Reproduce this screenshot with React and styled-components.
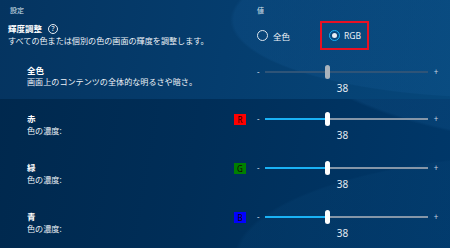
import React from 'react'
import styled, { createGlobalStyle } from 'styled-components'

const GlobalStyle = createGlobalStyle`
  html, body { margin: 0; padding: 0; background: #002c55; }
  body { font-family: "Noto Sans", "Noto Sans CJK JP", sans-serif; color: #fff; }
`

const Page = styled.div`
  width: 450px;
  height: 248px;
  overflow: hidden;
  display: flex;
  flex-direction: column;
  background:
    radial-gradient(ellipse 560px 240px at 600px 0px, rgba(16, 80, 135, 0.35) 60%, rgba(16, 80, 135, 0) 61%),
    radial-gradient(ellipse 460px 150px at 560px 260px, rgba(10, 70, 120, 0.25) 70%, rgba(10, 70, 120, 0) 71%),
    linear-gradient(100deg, #00284d 0%, #002e58 45%, #00386a 100%);
`

const TopBlock = styled.div`
  background:
    radial-gradient(ellipse 380px 110px at 500px 20px, rgba(20, 90, 150, 0.25) 70%, rgba(20, 90, 150, 0) 71%),
    linear-gradient(100deg, #053460 0%, #053d6e 50%, #06477a 100%);
  height: 99px;
  display: flex;
  flex-direction: column;
`

const Row = styled.div`
  display: grid;
  grid-template-columns: 233px 24px 1fr;
  height: ${p => p.$h}px;
  position: relative;
`

const Head = styled.div`
  font-size: 7px;
  color: #d8e2ec;
  padding-top: ${p => p.$top || 0}px;
  padding-left: ${p => p.$left || 0}px;
  line-height: 9px;
`

const Labels = styled.div`
  padding-left: ${p => p.$indent}px;
  padding-top: ${p => p.$top}px;
  display: flex;
  flex-direction: column;
  gap: ${p => p.$gap}px;
`

const Title = styled.div`
  font-size: 8.5px;
  font-weight: 700;
  line-height: 10px;
  display: flex;
  align-items: center;
  gap: 6px;
`

const Desc = styled.div`
  font-size: 8.1px;
  line-height: 10px;
  color: #eef3f8;
  white-space: nowrap;
`

const Help = styled.span`
  width: 8px;
  height: 8px;
  border: 1px solid #e8eef4;
  border-radius: 50%;
  font-size: 7px;
  font-weight: 400;
  line-height: 8px;
  text-align: center;
  display: inline-block;
`

const Options = styled.div`
  display: flex;
  align-items: flex-start;
  padding-top: 1px;
`

const Option = styled.label`
  display: flex;
  align-items: center;
  gap: ${p => (p.$marked ? 4 : 5)}px;
  font-size: 8.5px;
  color: #eef3f8;
  height: 29px;
  box-sizing: border-box;
  margin-left: ${p => p.$ml || 0}px;
  padding: ${p => (p.$marked ? '0 6px 0 7px' : '0')};
  border: ${p => (p.$marked ? '2px solid #e81123' : '0')};
`

const RadioDot = styled.span`
  width: 11px;
  height: 11px;
  box-sizing: border-box;
  border-radius: 50%;
  border: 1.5px solid ${p => (p.$on ? '#1ab2f5' : '#dde6ee')};
  display: flex;
  align-items: center;
  justify-content: center;
  &::after {
    content: '';
    width: 5px;
    height: 5px;
    border-radius: 50%;
    background: #e8eef4;
    display: ${p => (p.$on ? 'block' : 'none')};
  }
`

const BadgeCell = styled.div`
  padding-top: ${p => p.$top}px;
`

const Badge = styled.div`
  width: 12px;
  height: 11px;
  margin-left: 1px;
  background: ${p => p.$bg};
  color: #1a0000;
  font-size: 8px;
  line-height: 11px;
  text-align: center;
`

const SliderCell = styled.div`
  padding-top: ${p => p.$top}px;
  display: flex;
  flex-direction: column;
  width: 187px;
`

const SliderLine = styled.div`
  display: flex;
  align-items: center;
  height: 14px;
`

const Sign = styled.span`
  width: ${p => p.$w}px;
  font-size: 8px;
  color: #c8d4e0;
  text-align: ${p => p.$align};
  line-height: 14px;
`

const Track = styled.div`
  position: relative;
  width: 163px;
  height: 1.5px;
  background: ${p => (p.$off ? '#2e5478' : '#8596a8')};
`

const Fill = styled.div`
  position: absolute;
  left: 0;
  top: -0.5px;
  height: 2.5px;
  background: #1ab2f5;
`

const Thumb = styled.div`
  position: absolute;
  top: -6px;
  width: 5px;
  height: 14px;
  margin-left: -2px;
  border-radius: 3px;
  background: ${p => (p.$off ? '#a9b3bd' : '#ffffff')};
`

const Value = styled.div`
  width: 171px;
  text-align: center;
  font-size: 10px;
  line-height: 12px;
  color: #e4ebf2;
  margin-top: 3px;
`

function Slider({ value, off, top }) {
  return (
    <SliderCell $top={top}>
      <SliderLine>
        <Sign $w={8} $align="left">-</Sign>
        <Track $off={off}>
          {!off && <Fill style={{ width: `${value}%` }} />}
          <Thumb $off={off} style={{ left: `${value}%` }} />
        </Track>
        <Sign $w={16} $align="center">+</Sign>
      </SliderLine>
      <Value>{value}</Value>
    </SliderCell>
  )
}

const channels = [
  { name: '赤', key: 'R', bg: '#ff0000' },
  { name: '緑', key: 'G', bg: '#008000' },
  { name: '青', key: 'B', bg: '#0000ff' },
]

export default function App() {
  return (
    <>
      <GlobalStyle />
      <Page>
        <TopBlock>
          <Row $h={20}>
            <Head $top={6} $left={10}>設定</Head>
            <div />
            <Head $top={6}>値</Head>
          </Row>
          <Row $h={45}>
            <Labels $indent={8} $top={4} $gap={2}>
              <Title>
                輝度調整
                <Help>?</Help>
              </Title>
              <Desc>すべての色または個別の色の画面の輝度を調整します。</Desc>
            </Labels>
            <div />
            <Options>
              <Option>
                <RadioDot />
                全色
              </Option>
              <Option $marked $ml={30}>
                <RadioDot $on />
                RGB
              </Option>
            </Options>
          </Row>
          <Row $h={34}>
            <Labels $indent={27} $top={1} $gap={1}>
              <Title>全色</Title>
              <Desc>画面上のコンテンツの全体的な明るさや暗さ。</Desc>
            </Labels>
            <div />
            <Slider value={38} off top={-2} />
          </Row>
        </TopBlock>
        {channels.map(c => (
          <Row $h={49} key={c.key}>
            <Labels $indent={27} $top={15} $gap={2}>
              <Title>{c.name}</Title>
              <Desc>色の濃度:</Desc>
            </Labels>
            <BadgeCell $top={15}>
              <Badge $bg={c.bg}>{c.key}</Badge>
            </BadgeCell>
            <Slider value={38} top={13} />
          </Row>
        ))}
      </Page>
    </>
  )
}
